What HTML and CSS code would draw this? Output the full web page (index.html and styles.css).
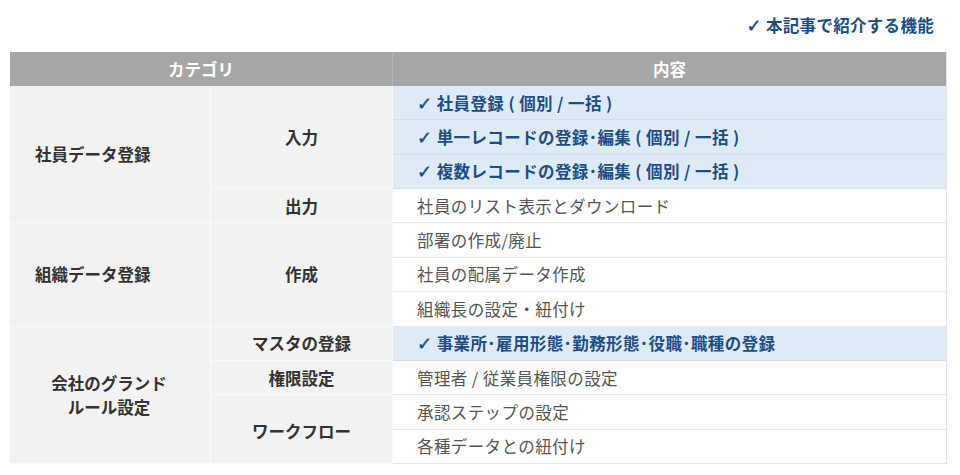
FILE: index.html
```html
<!DOCTYPE html>
<html lang="ja">
<head>
<meta charset="utf-8">
<title>機能一覧</title>
<link rel="stylesheet" href="styles.css">
</head>
<body>
<div class="legend"><span class="check">✓</span> 本記事で紹介する機能</div>
<table class="feat">
  <colgroup>
    <col class="c1"><col class="c2"><col class="c3">
  </colgroup>
  <thead>
    <tr><th colspan="2" class="h-cat">カテゴリ</th><th class="h-body">内容</th></tr>
  </thead>
  <tbody>
    <tr>
      <td rowspan="4" class="cat left">社員データ登録</td>
      <td rowspan="3" class="sub">入力</td>
      <td class="item hl"><span class="check">✓</span> 社員登録 ( 個別 / 一括 )</td>
    </tr>
    <tr><td class="item hl"><span class="check">✓</span> 単一レコードの登録･編集 ( 個別 / 一括 )</td></tr>
    <tr><td class="item hl"><span class="check">✓</span> 複数レコードの登録･編集 ( 個別 / 一括 )</td></tr>
    <tr>
      <td class="sub">出力</td>
      <td class="item">社員のリスト表示とダウンロード</td>
    </tr>
    <tr>
      <td rowspan="3" class="cat left">組織データ登録</td>
      <td rowspan="3" class="sub">作成</td>
      <td class="item">部署の作成/廃止</td>
    </tr>
    <tr><td class="item">社員の配属データ作成</td></tr>
    <tr><td class="item">組織長の設定・紐付け</td></tr>
    <tr>
      <td rowspan="4" class="cat center">会社のグランド<br>ルール設定</td>
      <td class="sub">マスタの登録</td>
      <td class="item hl"><span class="check">✓</span> 事業所･雇用形態･勤務形態･役職･職種の登録</td>
    </tr>
    <tr>
      <td class="sub">権限設定</td>
      <td class="item">管理者 / 従業員権限の設定</td>
    </tr>
    <tr>
      <td rowspan="2" class="sub wf">ワークフロー</td>
      <td class="item">承認ステップの設定</td>
    </tr>
    <tr><td class="item">各種データとの紐付け</td></tr>
  </tbody>
</table>
</body>
</html>
```

FILE: styles.css
```css
html, body {
  margin: 0;
  padding: 0;
  background: #ffffff;
}
body {
  font-family: "Noto Sans CJK JP", "Noto Sans", sans-serif;
  font-size: 16.5px;
  color: #333333;
}
.legend {
  height: 52px;
  box-sizing: border-box;
  padding: 12px 26px 0 0;
  text-align: right;
  font-weight: bold;
  color: #1d4d86;
  line-height: 26px;
  letter-spacing: 0.3px;
}
.check {
  font-family: "DejaVu Sans", sans-serif;
  font-weight: bold;
  font-size: 18px;
  line-height: 1;
  -webkit-text-stroke: 0.5px currentColor;
}
.feat {
  margin-left: 10px;
  width: 936px;
  border-collapse: separate;
  border-spacing: 0;
  table-layout: fixed;
  border-right: 1px solid #e4e4e4;
}
.c1 { width: 201px; }
.c2 { width: 182px; }
.c3 { width: 553px; }
thead tr { height: 34px; }
th {
  background: #a6a6a6;
  color: #ffffff;
  font-weight: bold;
  text-align: center;
  padding: 0;
  line-height: 20px;
}
.h-cat { border-right: 1px solid #b3b3b3; }
tbody tr { height: 34.36px; }
td {
  padding: 0;
  line-height: 24px;
  box-sizing: border-box;
}
.cat, .sub {
  background: #f2f2f2;
  font-weight: bold;
  color: #333333;
  border-right: 1px solid #fafafa;
  border-bottom: 1px solid #fafafa;
}
.cat.left { text-align: left; padding-left: 25px; }
.cat.center { text-align: center; padding-right: 2px; }
.sub { text-align: center; }
.wf { padding-top: 4px; }
.item {
  padding-left: 24px;
  color: #555555;
  border-bottom: 1px solid #e6e6e6;
  background: #ffffff;
  letter-spacing: 0.4px;
}
.item.hl {
  background: #deebf7;
  color: #1d4d86;
  font-weight: bold;
  border-bottom: 1px solid #d3e0ec;
}
```
